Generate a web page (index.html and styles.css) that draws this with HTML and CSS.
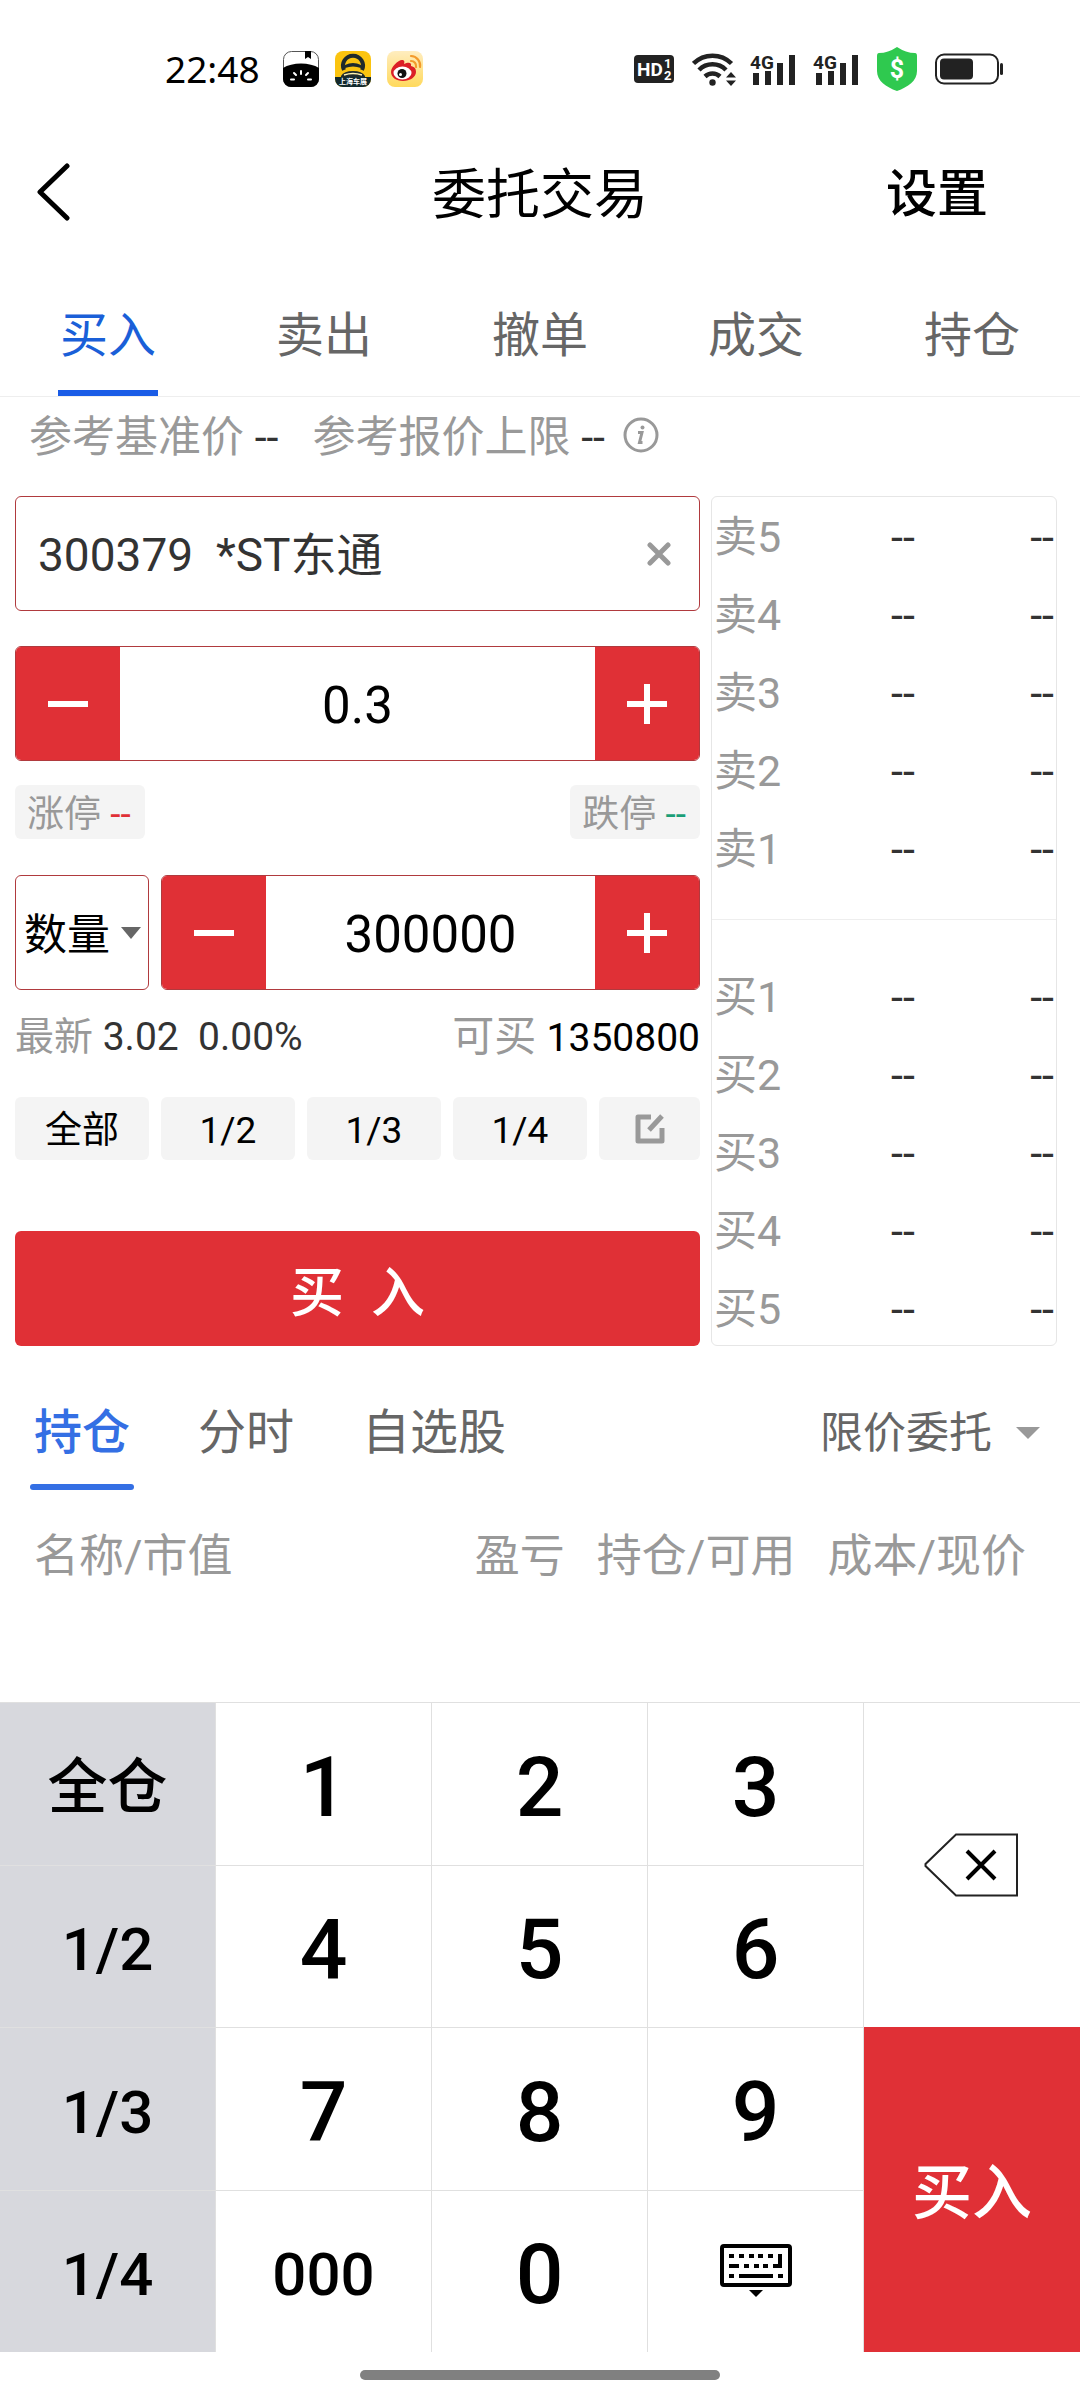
FILE: index.html
```html
<!DOCTYPE html>
<html lang="zh-CN">
<head>
<meta charset="utf-8">
<meta name="viewport" content="width=device-width, initial-scale=1">
<title>委托交易</title>
<link rel="stylesheet" href="styles.css">
</head>
<body>
<div class="app">
  <div class="status">
    <span class="clock">22:48</span>
    <div class="status-apps">
      <svg width="36" height="36" viewBox="0 0 36 36"><rect x=".5" y=".5" width="35" height="35" rx="8" fill="#fff" stroke="#555"/><path d="M0 17C9 11 27 11 36 17V28a8 8 0 0 1-8 8H8a8 8 0 0 1-8-8Z"/><path d="M22 0h6v8l-3-2-3 2Z"/><g stroke="#fff" stroke-width="2" stroke-linecap="round"><path d="M18 20v3M11 22l2 2M25 22l-2 2M8 28.500h3M25 28.500h3"/></g></svg>
      <svg width="36" height="36" viewBox="0 0 36 36"><rect width="36" height="36" rx="8" fill="#fbc410"/><path d="M0 26h36v2a8 8 0 0 1-8 8H8a8 8 0 0 1-8-8Z" fill="#12292d"/><path d="M9 19a10 10 0 1 1 18 0" fill="none" stroke="#1f2a2c" stroke-width="4"/><path d="M10 14q8-4 16 0v3q-8-3-16 0ZM6 25q3-5 12-5t12 5v1H6Z" fill="#1f2a2c"/><path d="M9 24q9-3 18 0" fill="none" stroke="#fff3b0" stroke-width="1.500"/><text x="18" y="33" text-anchor="middle" class="app-label">上海车展</text></svg>
      <svg width="36" height="36" viewBox="0 0 36 36"><defs><linearGradient id="wb" x2="0" y2="1"><stop stop-color="#ffedbf"/><stop offset="1" stop-color="#ffd95c"/></linearGradient></defs><rect width="36" height="36" rx="8" fill="url(#wb)"/><path d="M4 21C4 16 11 9 15 9c2 0 3 1 2 4 4-2 8-2 7 2 4 1 5 3 5 6 0 5-6 9-13 9S4 26 4 21Z" fill="#dc1f26"/><ellipse cx="15.500" cy="22" rx="9" ry="6.500" fill="#fff"/><circle cx="15" cy="22.500" r="4.500" fill="#111"/><circle cx="13.500" cy="23.500" r="1.500" fill="#fff"/><path d="M24 10a5 5 0 0 1 5 6M24 5a9.500 9.500 0 0 1 9 11" fill="none" stroke="#f39a2b" stroke-width="2.200" stroke-linecap="round"/></svg>
    </div>
    <div class="status-system">
      <svg width="40" height="28" viewBox="0 0 40 28"><rect width="40" height="28" rx="4" fill="#222"/><text x="3" y="21" class="hd">HD</text><text x="30" y="13" class="hd-sub">1</text><text x="30" y="25" class="hd-sub">2</text></svg>
      <svg width="44" height="34" viewBox="0 0 44 34"><g fill="none" stroke="#222" stroke-width="4.500"><path d="M1.500 11.500a27 27 0 0 1 38 0M7 18a19 19 0 0 1 27 0M13 24.500a11 11 0 0 1 15 0"/></g><circle cx="20.500" cy="30.500" r="3.200" fill="#222"/><path d="M34 25.500l5-5.500 5 5.500ZM34 28.500l5 5.500 5-5.500Z" fill="#222"/></svg>
      <div class="signals">
        <svg width="46" height="46" viewBox="0 -6 46 46"><text x="0" y="17" class="net">4G</text><path d="M3 21h6v12H3ZM15 19h6v14h-6ZM27 11h6v22h-6ZM39 3h6v30h-6Z" fill="#222"/></svg>
        <svg width="46" height="46" viewBox="0 -6 46 46"><text x="0" y="17" class="net">4G</text><path d="M3 21h6v12H3ZM15 19h6v14h-6ZM27 11h6v22h-6ZM39 3h6v30h-6Z" fill="#222"/></svg>
      </div>
      <svg width="40" height="44" viewBox="0 0 40 44"><path d="M20 0Q29 6 38 6q2 0 2 3v15c0 10-9 16-20 20C9 40 0 34 0 24V9q0-3 2-3Q11 6 20 0Z" fill="#2fc94f"/><text x="20" y="31" text-anchor="middle" class="dollar">$</text></svg>
      <svg width="68" height="32" viewBox="0 0 68 32"><rect x="1" y="1.500" width="62" height="29" rx="8" fill="none" stroke="#222" stroke-width="2"/><rect x="5" y="5.500" width="33" height="21" rx="4" fill="#222"/><rect x="65" y="10" width="3" height="12" rx="1.500" fill="#222"/></svg>
    </div>
  </div>

  <header class="bar">
    <button class="back" aria-label="返回"><svg width="34" height="60" viewBox="0 0 34 60"><path d="M31 4 4 30l27 26" fill="none" stroke="#000" stroke-width="5" stroke-linecap="round" stroke-linejoin="round"/></svg></button>
    <h1 class="title">委托交易</h1>
    <button class="settings">设置</button>
  </header>

  <nav class="tabs">
    <a class="tab tab-on" href="#buy">买入</a>
    <a class="tab" href="#sell">卖出</a>
    <a class="tab" href="#cancel">撤单</a>
    <a class="tab" href="#deals">成交</a>
    <a class="tab" href="#hold">持仓</a>
  </nav>

  <div class="limits">
    <span>参考基准价 <b>--</b></span>
    <span>参考报价上限 <b>--</b></span>
    <button class="info" aria-label="说明"><svg width="36" height="36" viewBox="0 0 36 36"><circle cx="18" cy="18" r="16" fill="none" stroke="#999" stroke-width="3"/><circle cx="19.500" cy="10.500" r="2" fill="#999"/><path d="M15 15.500h4l-2.500 10h3" fill="none" stroke="#999" stroke-width="3"/></svg></button>
  </div>

  <main class="trade">
    <form class="order">
      <div class="field">
        <input class="code" aria-label="证券代码" value="300379  *ST东通">
        <button type="button" class="clear" aria-label="清除"><svg width="24" height="24" viewBox="0 0 24 24"><path d="M3 3l18 18M21 3 3 21" stroke="#999" stroke-width="5" stroke-linecap="round"/></svg></button>
      </div>
      <div class="stepper price">
        <button type="button" class="step" aria-label="减少价格"><svg width="40" height="40" viewBox="0 0 40 40"><path d="M0 20h40" stroke="#fff" stroke-width="6"/></svg></button>
        <input class="number" aria-label="价格" value="0.3">
        <button type="button" class="step" aria-label="增加价格"><svg width="40" height="40" viewBox="0 0 40 40"><path d="M0 20h40M20 0v40" stroke="#fff" stroke-width="6"/></svg></button>
      </div>
      <div class="tags">
        <button type="button" class="tag">涨停 <span class="up">--</span></button>
        <button type="button" class="tag">跌停 <span class="down">--</span></button>
      </div>
      <div class="amount">
        <div class="unit">
          <select class="unit-select" aria-label="委托方式"><option>数量</option></select>
          <svg class="unit-arrow" width="20" height="12" viewBox="0 0 20 12"><path d="M0 0h20L10 12Z" fill="#666"/></svg>
        </div>
        <div class="stepper">
          <button type="button" class="step" aria-label="减少数量"><svg width="40" height="40" viewBox="0 0 40 40"><path d="M0 20h40" stroke="#fff" stroke-width="6"/></svg></button>
          <input class="number" aria-label="数量" value="300000">
          <button type="button" class="step" aria-label="增加数量"><svg width="40" height="40" viewBox="0 0 40 40"><path d="M0 20h40M20 0v40" stroke="#fff" stroke-width="6"/></svg></button>
        </div>
      </div>
      <div class="quote">
        <div class="latest">最新 <span class="latest-value">3.02&nbsp; 0.00%</span></div>
        <div class="can-buy">可买 <span class="can-buy-value">1350800</span></div>
      </div>
      <div class="chips">
        <button type="button" class="chip">全部</button>
        <button type="button" class="chip">1/2</button>
        <button type="button" class="chip">1/3</button>
        <button type="button" class="chip">1/4</button>
        <button type="button" class="chip chip-edit" aria-label="编辑"><svg width="30" height="30" viewBox="0 0 30 30"><path d="M16 3H3v24h24V14M27 2 14 16" fill="none" stroke="#999" stroke-width="5" stroke-linejoin="round"/></svg></button>
      </div>
      <button type="button" class="submit">买&nbsp; 入</button>
    </form>

    <section class="book">
      <table class="levels sell">
        <tr><th>卖5</th><td>--</td><td>--</td></tr>
        <tr><th>卖4</th><td>--</td><td>--</td></tr>
        <tr><th>卖3</th><td>--</td><td>--</td></tr>
        <tr><th>卖2</th><td>--</td><td>--</td></tr>
        <tr><th>卖1</th><td>--</td><td>--</td></tr>
      </table>
      <table class="levels buy">
        <tr><th>买1</th><td>--</td><td>--</td></tr>
        <tr><th>买2</th><td>--</td><td>--</td></tr>
        <tr><th>买3</th><td>--</td><td>--</td></tr>
        <tr><th>买4</th><td>--</td><td>--</td></tr>
        <tr><th>买5</th><td>--</td><td>--</td></tr>
      </table>
    </section>
  </main>

  <section class="holdings">
    <div class="subtabs">
      <a class="subtab subtab-on" href="#positions">持仓</a>
      <a class="subtab" href="#chart">分时</a>
      <a class="subtab" href="#watch">自选股</a>
      <button class="order-type">限价委托 <svg width="24" height="12" viewBox="0 0 24 12"><path d="M0 0h24L12 12Z" fill="#999"/></svg></button>
    </div>
    <div class="columns">
      <span class="col-name">名称/市值</span><span>盈亏</span><span>持仓/可用</span><span>成本/现价</span>
    </div>
  </section>

  <div class="keypad">
    <button class="key side">全仓</button><button class="key">1</button><button class="key">2</button><button class="key">3</button>
    <button class="key key-icon erase" aria-label="删除"><svg width="96" height="64" viewBox="0 0 96 64"><path d="M32 1.500h61v61H32L1.500 33v-2Z" fill="none" stroke="#222" stroke-width="2"/><path d="M43 18l28 28M71 18 43 46" stroke="#000" stroke-width="4"/></svg></button>
    <button class="key side">1/2</button><button class="key">4</button><button class="key">5</button><button class="key">6</button>
    <button class="key side">1/3</button><button class="key">7</button><button class="key">8</button><button class="key">9</button>
    <button class="key confirm">买入</button>
    <button class="key side">1/4</button><button class="key zeros">000</button><button class="key">0</button>
    <button class="key key-icon" aria-label="收起键盘"><svg width="72" height="54" viewBox="0 0 72 54"><rect x="2" y="2" width="68" height="39" rx="2" fill="none" stroke="#000" stroke-width="4"/><path d="M9 12h5M19 12h5M29 12h5M38 12h5M48 12h5M9 22h10M24 22h5M34 22h5M43 22h5M53 22h9M9 32h5M19 32h34M58 32h5" stroke="#000" stroke-width="4"/><path d="M60 10v14" stroke="#000" stroke-width="4"/><path d="M29 46h14l-7 7Z"/></svg></button>
  </div>
  <div class="home"><span class="home-pill"></span></div>
</div>
</body>
</html>
```
FILE: styles.css
```css
* { box-sizing: border-box; }

body {
  margin: 0;
  background: #fff;
  color: #000;
  font-family: Roboto, "Noto Sans CJK SC", sans-serif;
}

button, input, select {
  margin: 0;
  padding: 0;
  border: 0;
  background: none;
  color: inherit;
  font: inherit;
}

a { color: inherit; text-decoration: none; }
svg { display: block; flex: none; }

.app { display: flex; flex-direction: column; min-height: 100vh; }

/* Status bar */
.status {
  display: flex;
  align-items: center;
  height: 138px;
  padding: 0 77px 0 165px;
}
.clock { font: 37px/44px "Noto Sans", sans-serif; }
.status-apps { display: flex; gap: 16px; margin-left: 23px; }
.status-system { display: flex; align-items: center; gap: 18px; margin-left: auto; }
.signals { display: flex; gap: 17px; margin-left: -4px; }
.app-label { font: bold 7px "Noto Sans CJK SC", sans-serif; fill: #fff; }
.hd { font: bold 19px Roboto, sans-serif; fill: #fff; }
.hd-sub { font: bold 13px Roboto, sans-serif; fill: #fff; }
.net { font: bold 19px Roboto, sans-serif; fill: #222; }
.dollar { font: bold 25px Roboto, sans-serif; fill: #fff; }

/* Title bar */
.bar {
  display: grid;
  grid-template-columns: 1fr auto 1fr;
  align-items: center;
  height: 112px;
  padding: 0 92px 0 36px;
}
.back { justify-self: start; padding-bottom: 4px; }
.title { margin: 0 0 0 56px; padding-top: 4px; font-size: 54px; line-height: 64px; font-weight: 400; }
.settings { justify-self: end; padding-top: 2px; font-size: 51px; line-height: 64px; font-weight: 500; }

/* Main tabs */
.tabs {
  display: flex;
  height: 147px;
  border-bottom: 1px solid #eee;
  color: #666;
  font-size: 48px;
  line-height: 64px;
}
.tab {
  display: flex;
  flex: 1;
  flex-direction: column;
  align-items: center;
  justify-content: space-between;
  padding-top: 54px;
}
.tab-on { color: #1a5fd8; }
.tab-on::after { content: ""; width: 100px; height: 6px; background: #1a5ce6; }

.limits {
  display: flex;
  align-items: center;
  height: 77px;
  padding: 2px 29px 0;
  gap: 34px;
  color: #999;
  font-size: 43px;
  line-height: 64px;
}
.limits b { color: #333; font-weight: 400; }
.info { margin-left: -16px; padding-bottom: 4px; }

/* Order form and order book */
.trade {
  display: grid;
  grid-template-columns: minmax(0, 685fr) minmax(0, 346fr);
  gap: 11px;
  padding: 22px 23px 0 15px;
}
.order { display: flex; flex-direction: column; }
.field {
  display: flex;
  align-items: center;
  height: 115px;
  padding: 0 28px 0 22px;
  border: 1px solid #b03a3e;
  border-radius: 6px;
}
.code { flex: 1; min-width: 0; padding-top: 2px; color: #333; font-size: 46px; line-height: 64px; }
.stepper {
  display: flex;
  flex: 1;
  height: 115px;
  border: 1px solid #b03a3e;
  border-radius: 6px;
  overflow: hidden;
}
.price { flex: none; margin-top: 35px; }
.step { display: grid; place-items: center; width: 104px; background: #e03036; }
.number { flex: 1; min-width: 0; padding-top: 4px; font-size: 51px; text-align: center; }
.tags { display: flex; justify-content: space-between; margin-top: 24px; }
.tag {
  height: 54px;
  padding: 6px 14px 0 12px;
  border-radius: 6px;
  background: #f4f4f4;
  color: #999;
  font-size: 37px;
  line-height: 48px;
}
.up { color: #e03036; }
.down { color: #1b9e77; }
.amount { display: flex; gap: 12px; margin-top: 36px; }
.unit {
  display: flex;
  align-items: center;
  justify-content: space-between;
  width: 134px;
  padding: 0 7px 0 8px;
  border: 1px solid #b03a3e;
  border-radius: 6px;
}
.unit-select { width: 92px; padding-top: 4px; appearance: none; font-size: 43px; line-height: 64px; }
.quote {
  display: flex;
  justify-content: space-between;
  margin-top: 15px;
  color: #999;
  font-size: 39px;
  line-height: 64px;
}
.latest-value { color: #333; }
.can-buy { font-size: 42px; }
.can-buy-value { color: #000; font-size: 39px; }
.chips { display: flex; gap: 12px; margin-top: 27px; }
.chip {
  display: grid;
  flex: 134;
  place-items: center;
  height: 63px;
  padding-top: 4px;
  border-radius: 6px;
  background: #f4f4f4;
  font-size: 37px;
  line-height: 59px;
}
.chip-edit { flex: 101; padding-top: 0; }
.submit {
  height: 115px;
  margin-top: 71px;
  border-radius: 6px;
  background: #e03036;
  color: #fff;
  font-size: 54px;
  font-weight: 500;
}

.book { border: 1px solid #e6e6e6; border-radius: 6px; }
.levels { width: 100%; border-collapse: collapse; table-layout: fixed; font-size: 43px; line-height: 60px; }
.levels th { width: 40%; padding: 0 0 0 2px; color: #999; font-weight: 400; text-align: left; }
.levels td { width: 31%; padding: 0; color: #333; text-align: center; }
.levels td + td { width: 29%; padding-right: 2px; text-align: right; }
.levels tr + tr > * { padding-top: 18px; }
.sell { margin: 10px 0 40px; }
.buy { border-top: 1px solid #eee; margin-bottom: 5px; }
.buy tr:first-child > * { padding-top: 47px; }

/* Holdings */
.subtabs {
  display: flex;
  align-items: flex-start;
  gap: 68px;
  height: 144px;
  padding: 55px 40px 0 34px;
  color: #666;
  font-size: 48px;
  line-height: 64px;
}
.subtab { display: flex; flex-direction: column; gap: 19px; }
.subtab-on { color: #346fe4; font-weight: 500; }
.subtab-on::after { content: ""; height: 6px; margin: 0 -4px; border-radius: 3px; background: #346fe4; }
.order-type { display: flex; align-items: center; gap: 24px; margin-left: auto; font-size: 43px; line-height: 64px; }
.columns {
  display: flex;
  gap: 32px;
  padding: 35px 54px 0 34px;
  color: #999;
  font-size: 45px;
  line-height: 64px;
}
.col-name { margin-right: auto; }

/* Keypad */
.keypad {
  display: grid;
  grid-template-columns: repeat(5, 1fr);
  grid-auto-rows: 1fr;
  height: 650px;
  margin-top: auto;
}
.key {
  display: grid;
  place-items: center;
  padding-top: 8px;
  border-top: 1px solid #e0e0e0;
  border-right: 1px solid #e0e0e0;
  font-size: 84px;
  line-height: 96px;
  font-weight: 500;
}
.key-icon { padding-top: 0; }
.side { background: #d7d8dd; font-size: 60px; }
.zeros { font-size: 60px; }
.erase { grid-column: 5; grid-row: 1 / 3; border-right: 0; }
.confirm { grid-column: 5; grid-row: 3 / 5; border: 0; background: #e03036; color: #fff; font-size: 60px; }

.home { display: flex; justify-content: center; height: 48px; padding-top: 18px; }
.home-pill { width: 33.333%; height: 10px; border-radius: 5px; background: #808080; }
```
